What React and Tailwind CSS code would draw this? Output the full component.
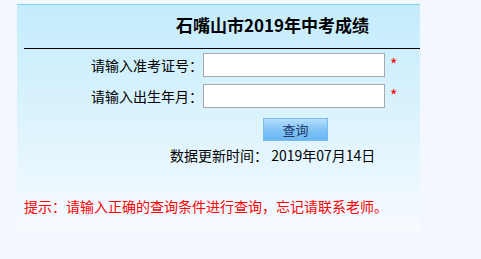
export default function App() {
  const font = { fontFamily: '"Noto Sans CJK SC", "Liberation Sans", sans-serif' };
  return (
    <div className="w-[481px] h-[259px] bg-[#f3f7fe] pt-[4px] pl-[17px]" style={font}>
      <div className="w-[403px] h-[229px] border-t border-[#7fd4ef] bg-gradient-to-b from-[#c4ecfc] via-[#dcf3fd] to-[#f7fbff]">
        {/* Title */}
        <div className="h-[43px] pl-[159px] pt-[8px] text-[17px] leading-[24px] font-bold text-black">
          石嘴山市2019年中考成绩
        </div>
        <div className="ml-[7px] h-px bg-black" />

        {/* Form */}
        <div className="mt-[4px] flex items-center">
          <label className="w-[186px] text-right text-[14px] text-black leading-[20px]">请输入准考证号：</label>
          <input className="w-[182px] h-[24px] bg-white border border-[#a9a9a9] outline-none" />
          <span className="ml-[5px] self-start text-[#ff0000] text-[16px] leading-[16px] mt-[3px]">*</span>
        </div>
        <div className="mt-[7px] flex items-center">
          <label className="w-[186px] text-right text-[14px] text-black leading-[20px]">请输入出生年月：</label>
          <input className="w-[182px] h-[24px] bg-white border border-[#a9a9a9] outline-none" />
          <span className="ml-[5px] self-start text-[#ff0000] text-[16px] leading-[16px] mt-[3px]">*</span>
        </div>

        <button className="mt-[10px] ml-[246px] w-[65px] h-[23px] flex items-center justify-center border border-[#79bdf0] bg-gradient-to-b from-[#b6defc] via-[#82c4f7] to-[#6ab6f3] text-[13px] text-[#1c3a66] leading-none">
          查询
        </button>

        <div className="mt-[4px] ml-[153px] text-[14px] leading-[20px] text-black">
          数据更新时间：&nbsp;2019年07月14日
        </div>

        <div className="mt-[31px] ml-[7px] text-[14px] leading-[20px] text-[#ff0000]">
          提示：请输入正确的查询条件进行查询，忘记请联系老师。
        </div>
      </div>
    </div>
  );
}
